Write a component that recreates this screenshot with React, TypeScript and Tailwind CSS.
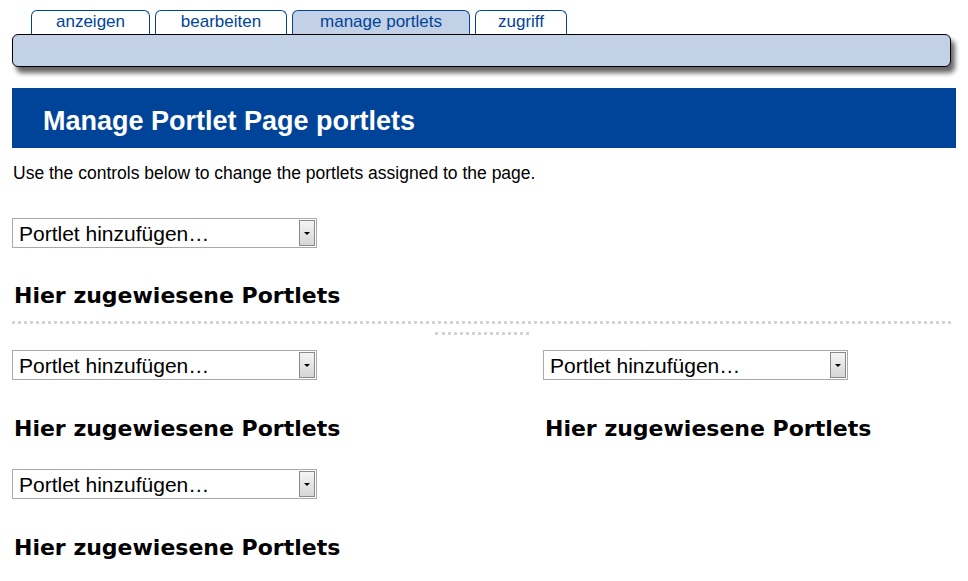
import React from "react";

const Sel = () => (
  <div className="flex h-[30px] w-[305px] items-center border border-[#a9a9a9] bg-white pl-[6px]">
    <span className="flex-1 text-[21px] leading-none text-black" style={{ fontFamily: '"Liberation Sans", Arial, sans-serif' }}>Portlet hinzufügen…</span>
    <div className="mr-[1px] flex h-[26px] w-[16px] items-center justify-center border border-[#8a8a8a] bg-gradient-to-b from-[#f4f4f4] to-[#d6d6d6]">
      <div className="h-0 w-0 border-x-[3px] border-t-[3px] border-x-transparent border-t-black" />
    </div>
  </div>
);

const H = () => (
  <h2 className="text-[22px] font-bold leading-none text-black" style={{ fontFamily: '"DejaVu Sans", sans-serif' }}>Hier zugewiesene Portlets</h2>
);

export default function App() {
  const tabs = ["anzeigen", "bearbeiten", "manage portlets", "zugriff"];
  const widths = ["w-[119px]", "w-[132px]", "w-[178px]", "w-[92px]"];
  return (
    <div className="w-[968px] h-[581px] overflow-hidden bg-white" style={{ fontFamily: '"Liberation Sans", Arial, sans-serif' }}>
      <div className="flex gap-[5px] pl-[31px] pt-[10px]">
        {tabs.map((t, i) => (
          <div key={t} className={`${widths[i]} h-[24px] rounded-t-[6px] border border-b-0 border-[#00449a] text-center text-[17px] leading-[22px] text-[#00449a] ${i === 2 ? "bg-[#c3d1e6]" : "bg-white"}`}>{t}</div>
        ))}
      </div>
      <div className="ml-[12px] h-[33px] w-[939px] rounded-[6px] border border-black bg-[#c3d1e6] shadow-[4px_6px_5px_rgba(0,0,0,0.6)]" />
      <div className="mx-[12px] mt-[21px] flex h-[60px] items-center bg-[#00449a] pl-[31px] pt-[7px]">
        <h1 className="text-[27px] font-bold text-white">Manage Portlet Page portlets</h1>
      </div>
      <p className="ml-[13px] mt-[12px] text-[17.5px] text-black">Use the controls below to change the portlets assigned to the page.</p>
      <div className="ml-[12px] mt-[32px]"><Sel /></div>
      <div className="ml-[14px] mt-[37px]"><H /></div>
      <div className="ml-[12px] mt-[14px] w-[939px] border-t-[3px] border-dotted border-[#d4d4d4]" />
      <div className="ml-[435px] mt-[8px] w-[94px] border-t-[3px] border-dotted border-[#d4d4d4]" />
      <div className="mt-[15px] grid grid-cols-[531px_1fr] pl-[12px]">
        <div>
          <Sel />
          <div className="ml-[2px] mt-[38px]"><H /></div>
          <div className="mt-[29px]"><Sel /></div>
          <div className="ml-[2px] mt-[38px]"><H /></div>
        </div>
        <div>
          <Sel />
          <div className="ml-[2px] mt-[38px]"><H /></div>
        </div>
      </div>
    </div>
  );
}
